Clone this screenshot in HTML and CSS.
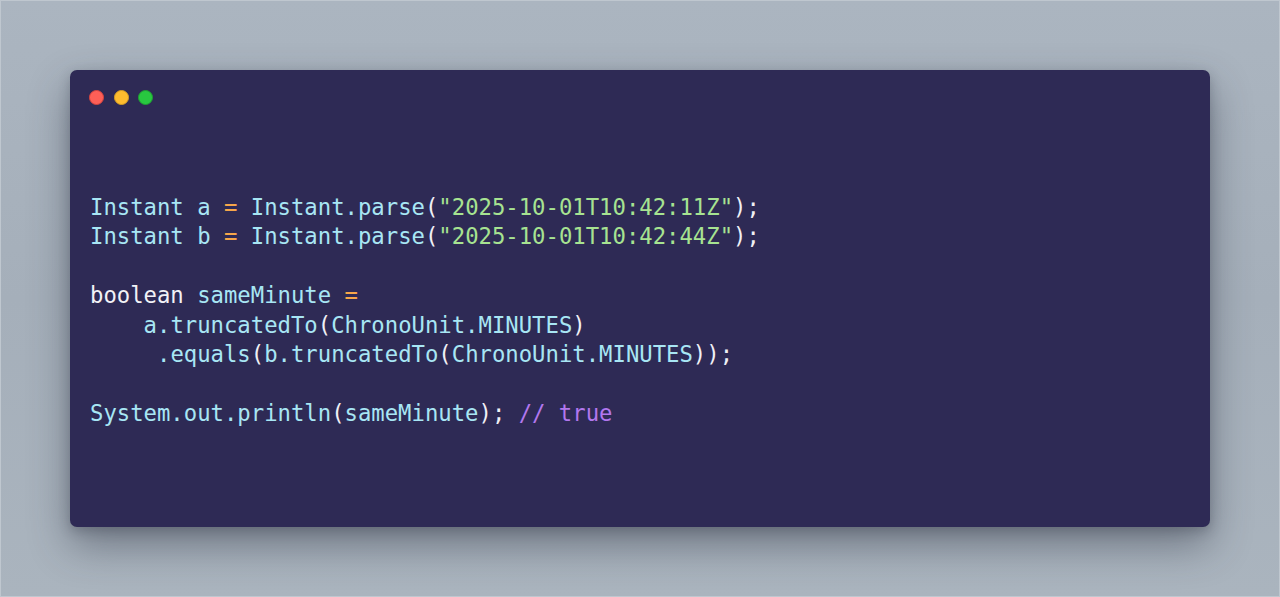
FILE: index.html
```html
<!DOCTYPE html>
<html>
<head>
<meta charset="utf-8">
<link rel="stylesheet" href="styles.css">
</head>
<body>
<div class="stage">
  <div class="window">
    <div class="dots">
      <span class="dot red"></span>
      <span class="dot yellow"></span>
      <span class="dot green"></span>
    </div>
    <pre class="code"><span class="id">Instant a</span> <span class="op">=</span> <span class="id">Instant.parse</span>(<span class="str">"2025-10-01T10:42:11Z"</span>);
<span class="id">Instant b</span> <span class="op">=</span> <span class="id">Instant.parse</span>(<span class="str">"2025-10-01T10:42:44Z"</span>);

<span class="kw">boolean</span> <span class="id">sameMinute</span> <span class="op">=</span>
    <span class="id">a.truncatedTo</span>(<span class="id">ChronoUnit.MINUTES</span>)
     <span class="id">.equals</span>(<span class="id">b.truncatedTo</span>(<span class="id">ChronoUnit.MINUTES</span>));

<span class="id">System.out.println</span>(<span class="id">sameMinute</span>); <span class="cm">// true</span></pre>
  </div>
</div>
</body>
</html>
```
FILE: styles.css
```css
html, body {
  margin: 0;
  padding: 0;
}
body {
  width: 1280px;
  height: 597px;
  overflow: hidden;
  background: linear-gradient(180deg, #abb5c0 0%, #a5afba 50%, #aab4be 100%);
}
.stage {
  box-sizing: border-box;
  width: 1280px;
  height: 597px;
  padding: 70px 70px 0 70px;
  border: 1px solid #bfc7cf;
}
.window {
  box-sizing: border-box;
  margin-left: -1px;
  margin-top: -1px;
  width: 1140px;
  height: 457px;
  background: #2e2a55;
  border-radius: 7px;
  box-shadow: 0 18px 40px rgba(40, 45, 60, 0.45), 0 4px 12px rgba(40, 45, 60, 0.25);
  padding: 20px 20px 20px 19px;
}
.dots {
  display: flex;
  gap: 9.5px;
  height: 15px;
}
.dot {
  width: 15px;
  height: 15px;
  border-radius: 50%;
  box-sizing: border-box;
}
.red { background: #fe5f57; border: 1px solid #d9443e; }
.yellow { background: #febc2e; border: 1px solid #d8a024; }
.green { background: #28c840; border: 1px solid #1fa032; }
.code {
  margin: 88px 0 0 1px;
  font-family: "DejaVu Sans Mono", monospace;
  font-size: 22.25px;
  line-height: 29.4px;
  color: #f0f0f5;
}
.id { color: #a8e6f4; }
.op { color: #f7a64a; }
.str { color: #a7e391; }
.kw { color: #f2f2f7; }
.cm { color: #b277ee; }
```
